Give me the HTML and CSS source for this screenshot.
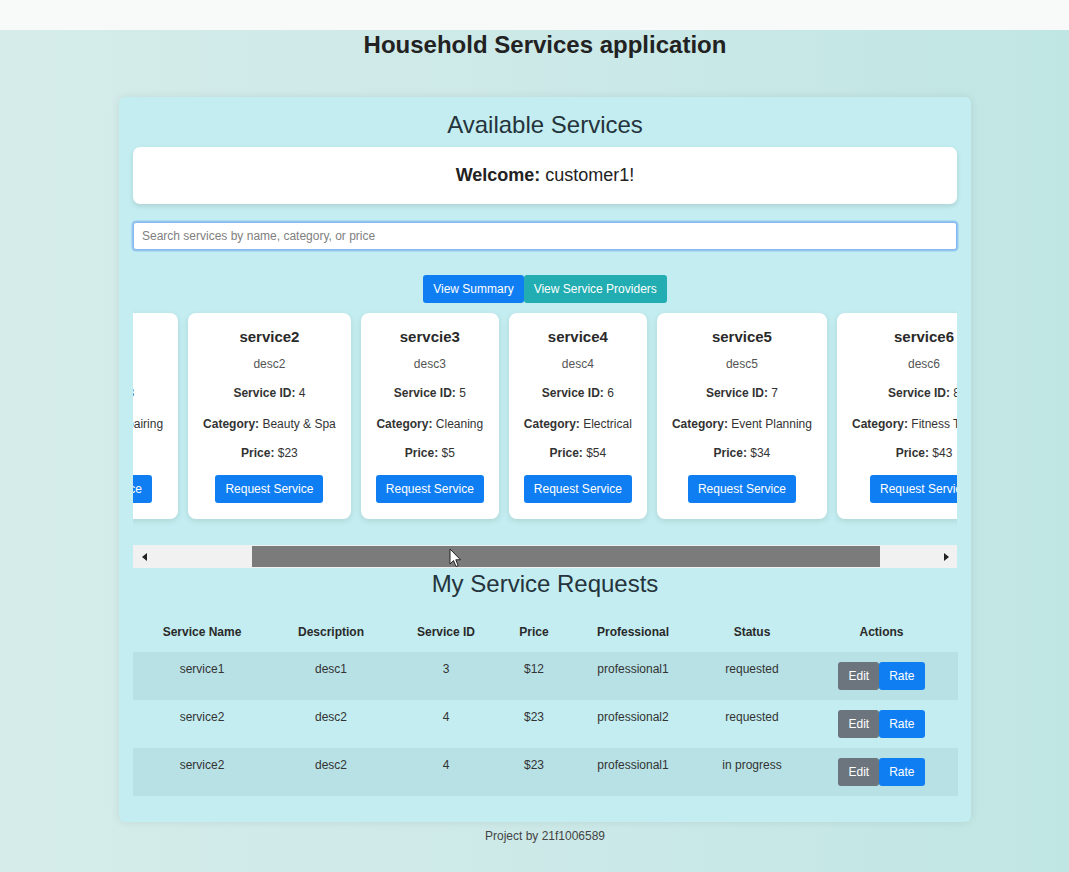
FILE: index.html
```html
<!DOCTYPE html>
<html lang="en">
<head>
<meta charset="utf-8">
<title>Household Services application</title>
<link rel="stylesheet" href="styles.css">
</head>
<body>
<div class="topbar"></div>
<div class="page">
  <h1 class="app-title">Household Services application</h1>
  <main class="panel">
    <h2 class="section-title">Available Services</h2>
    <div class="welcome"><strong>Welcome:</strong> customer1!</div>
    <input class="search" type="text" placeholder="Search services by name, category, or price">
    <div class="btn-row">
      <button class="btn btn-primary">View Summary</button>
      <button class="btn btn-info">View Service Providers</button>
    </div>
    <div class="scroll-wrap">
      <div class="cards" id="cards">
        <div class="card">
          <h5 class="card-title">service1</h5>
          <p class="card-desc">desc1</p>
          <p class="card-line line-id"><strong>Service ID:</strong> 3</p>
          <p class="card-line line-cat"><strong>Category:</strong> AC Repairing</p>
          <p class="card-line line-price"><strong>Price:</strong> $12</p>
          <button class="btn btn-primary">Request Service</button>
        </div>
        <div class="card">
          <h5 class="card-title">service2</h5>
          <p class="card-desc">desc2</p>
          <p class="card-line line-id"><strong>Service ID:</strong> 4</p>
          <p class="card-line line-cat"><strong>Category:</strong> Beauty &amp; Spa</p>
          <p class="card-line line-price"><strong>Price:</strong> $23</p>
          <button class="btn btn-primary">Request Service</button>
        </div>
        <div class="card">
          <h5 class="card-title">servcie3</h5>
          <p class="card-desc">desc3</p>
          <p class="card-line line-id"><strong>Service ID:</strong> 5</p>
          <p class="card-line line-cat"><strong>Category:</strong> Cleaning</p>
          <p class="card-line line-price"><strong>Price:</strong> $5</p>
          <button class="btn btn-primary">Request Service</button>
        </div>
        <div class="card">
          <h5 class="card-title">service4</h5>
          <p class="card-desc">desc4</p>
          <p class="card-line line-id"><strong>Service ID:</strong> 6</p>
          <p class="card-line line-cat"><strong>Category:</strong> Electrical</p>
          <p class="card-line line-price"><strong>Price:</strong> $54</p>
          <button class="btn btn-primary">Request Service</button>
        </div>
        <div class="card">
          <h5 class="card-title">service5</h5>
          <p class="card-desc">desc5</p>
          <p class="card-line line-id"><strong>Service ID:</strong> 7</p>
          <p class="card-line line-cat"><strong>Category:</strong> Event Planning</p>
          <p class="card-line line-price"><strong>Price:</strong> $34</p>
          <button class="btn btn-primary">Request Service</button>
        </div>
        <div class="card">
          <h5 class="card-title">service6</h5>
          <p class="card-desc">desc6</p>
          <p class="card-line line-id"><strong>Service ID:</strong> 8</p>
          <p class="card-line line-cat"><strong>Category:</strong> Fitness Training</p>
          <p class="card-line line-price"><strong>Price:</strong> $43</p>
          <button class="btn btn-primary">Request Service</button>
        </div>
      </div>
      <div class="hscroll" aria-hidden="true">
        <span class="hs-btn hs-left"></span>
        <div class="hs-track"><div class="hs-thumb"></div></div>
        <span class="hs-btn hs-right"></span>
      </div>
      <svg class="cursor" width="13" height="20" viewBox="0 0 13 20" aria-hidden="true">
        <path d="M1 1 L1 16 L4.5 12.5 L7 18.5 L9.2 17.6 L6.8 11.8 L11.5 11.8 Z" fill="#fff" stroke="#222" stroke-width="1" stroke-linejoin="round"/>
      </svg>
    </div>
    <h2 class="section-title requests-title">My Service Requests</h2>
    <table class="requests">
      <colgroup>
        <col class="c-name"><col class="c-desc"><col class="c-id"><col class="c-price"><col class="c-pro"><col class="c-status"><col class="c-actions">
      </colgroup>
      <thead>
        <tr><th>Service Name</th><th>Description</th><th>Service ID</th><th>Price</th><th>Professional</th><th>Status</th><th>Actions</th></tr>
      </thead>
      <tbody>
        <tr>
          <td>service1</td><td>desc1</td><td>3</td><td>$12</td><td>professional1</td><td>requested</td>
          <td><div class="actions"><button class="btn btn-secondary">Edit</button><button class="btn btn-primary">Rate</button></div></td>
        </tr>
        <tr>
          <td>service2</td><td>desc2</td><td>4</td><td>$23</td><td>professional2</td><td>requested</td>
          <td><div class="actions"><button class="btn btn-secondary">Edit</button><button class="btn btn-primary">Rate</button></div></td>
        </tr>
        <tr>
          <td>service2</td><td>desc2</td><td>4</td><td>$23</td><td>professional1</td><td>in progress</td>
          <td><div class="actions"><button class="btn btn-secondary">Edit</button><button class="btn btn-primary">Rate</button></div></td>
        </tr>
      </tbody>
    </table>
  </main>
  <footer class="footer">Project by 21f1006589</footer>
</div>
<script src="script.js"></script>
</body>
</html>
```
FILE: styles.css
```css
* { box-sizing: border-box; }

html, body {
  margin: 0;
  padding: 0;
}

body {
  min-height: 872px;
  font-family: "Liberation Sans", Arial, sans-serif;
  color: #333;
  background: linear-gradient(to right, #d5ecea 0%, #cce9e8 50%, #c0e6e3 100%);
}

.topbar {
  height: 30px;
  background: #f8f9f9;
}

.page {
  padding-left: 21px;
  padding-bottom: 20px;
}

.app-title {
  margin: 1px 0 38px;
  font-size: 24px;
  line-height: 28px;
  font-weight: bold;
  text-align: center;
  color: #222;
}

.panel {
  width: 852px;
  margin: 0 auto;
  padding: 14px;
  background: #c3edf0;
  border-radius: 6px;
  box-shadow: 0 0 10px rgba(0, 0, 0, 0.08);
}

.section-title {
  margin: 0 0 8px;
  font-size: 24px;
  line-height: 28px;
  font-weight: normal;
  text-align: center;
  color: #25343c;
}

.welcome {
  background: #fff;
  border-radius: 7px;
  padding: 15px;
  font-size: 18px;
  line-height: 27px;
  text-align: center;
  color: #222;
  box-shadow: 0 2px 5px rgba(0, 0, 0, 0.12);
}

.search {
  display: block;
  width: 100%;
  height: 28px;
  margin-top: 18px;
  padding: 0 8px;
  font-family: "Liberation Sans", Arial, sans-serif;
  font-size: 12px;
  background: #fff;
  border: 1px solid #86b7f0;
  border-radius: 3px;
  box-shadow: 0 0 0 1.5px rgba(110, 170, 240, 0.55);
  outline: none;
}

.search::placeholder { color: #808080; }

.btn-row {
  display: flex;
  justify-content: center;
  margin-top: 25px;
}

.btn {
  height: 28px;
  padding: 0 10px;
  border: none;
  border-radius: 3px;
  font-family: "Liberation Sans", Arial, sans-serif;
  font-size: 12px;
  line-height: 28px;
  color: #fff;
  white-space: nowrap;
}

.btn-primary { background: #0f7ef3; }
.btn-info { background: #21adb1; }
.btn-secondary { background: #6c757d; }

.scroll-wrap {
  position: relative;
}

.cards {
  display: flex;
  gap: 10px;
  padding: 10px 10px 26px;
  overflow: hidden;
}

.card {
  flex: none;
  display: flex;
  flex-direction: column;
  align-items: center;
  padding: 15px 15px 16px;
  background: #fff;
  border-radius: 8px;
  box-shadow: 0 2px 6px rgba(0, 0, 0, 0.1);
  text-align: center;
  white-space: nowrap;
}

.card-title {
  margin: 0 0 11px;
  font-size: 15px;
  line-height: 18px;
  font-weight: bold;
  color: #2a2a2a;
}

.card-desc {
  margin: 0 0 15px;
  font-size: 12px;
  line-height: 14px;
  color: #555;
}

.card-line {
  margin: 0 0 15px;
  font-size: 12px;
  line-height: 14px;
  color: #333;
}

.line-id { margin-bottom: 17px; }

.hscroll {
  display: flex;
  height: 23px;
  background: #f1f1f1;
}

.hs-btn {
  flex: none;
  width: 23px;
  height: 23px;
  position: relative;
}

.hs-left::after,
.hs-right::after {
  content: "";
  position: absolute;
  top: 8px;
  width: 0;
  height: 0;
  border-top: 4px solid transparent;
  border-bottom: 4px solid transparent;
}

.hs-left::after {
  left: 9px;
  border-right: 5px solid #222;
}

.hs-right::after {
  left: 10px;
  border-left: 5px solid #222;
}

.hs-track {
  flex: 1;
  padding: 1px 0;
}

.hs-thumb {
  height: 21px;
  width: 628px;
  margin-left: 96px;
  background: #7b7b7b;
}

.cursor {
  position: absolute;
  left: 316px;
  top: 245px;
}

.requests-title {
  margin: 2px 0 15px;
}

.requests {
  width: 100%;
  border-collapse: collapse;
  table-layout: fixed;
  margin-bottom: 12px;
  font-size: 12px;
}

.c-name { width: 138px; }
.c-desc { width: 120px; }
.c-id { width: 110px; }
.c-price { width: 66px; }
.c-pro { width: 132px; }
.c-status { width: 106px; }
.c-actions { width: 153px; }

.requests th {
  padding: 12px 4px;
  line-height: 15px;
  font-weight: bold;
  color: #2a2a2a;
  text-align: center;
}

.requests td {
  padding: 10px 4px;
  line-height: 14px;
  color: #333;
  text-align: center;
  vertical-align: top;
}

.requests tbody tr:nth-child(odd) {
  background: #b8e1e6;
}

.actions {
  display: flex;
  justify-content: center;
}

.footer {
  margin-top: 7px;
  font-size: 12px;
  line-height: 14px;
  text-align: center;
  color: #444;
}
```
FILE: script.js
```js
document.getElementById('cards').scrollLeft = 125;
```
